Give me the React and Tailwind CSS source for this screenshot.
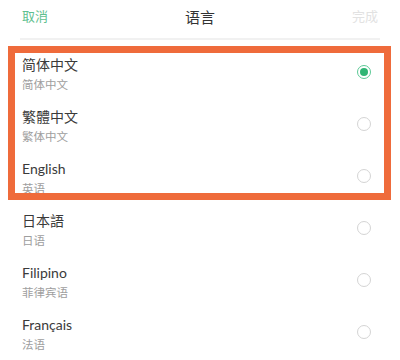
import React from "react";

const items = [
  { t: "简体中文", s: "简体中文", sel: true },
  { t: "繁體中文", s: "繁体中文" },
  { t: "English", s: "英语" },
  { t: "日本語", s: "日语" },
  { t: "Filipino", s: "菲律宾语" },
  { t: "Français", s: "法语" },
];

const font = { fontFamily: 'Lato, "Noto Sans CJK SC", sans-serif' };

function Radio({ sel }) {
  if (sel) {
    return (
      <div className="w-[14px] h-[14px] rounded-full border-[1.5px] border-[#5cc996] flex items-center justify-center">
        <div className="w-[8px] h-[8px] rounded-full bg-[#2fb574]" />
      </div>
    );
  }
  return <div className="w-[14px] h-[14px] rounded-full border-[1.5px] border-[#d4d4d4]" />;
}

export default function App() {
  return (
    <div className="relative w-[400px] h-[360px] bg-white overflow-hidden" style={font}>
      <div className="h-[38px] flex items-center justify-between px-[22px] pb-[4px]">
        <span className="text-[13px] text-[#5fbf90]">取消</span>
        <span className="text-[15px] text-[#333]">语言</span>
        <span className="text-[13px] text-[#e2e2e2]">完成</span>
      </div>
      <div className="mx-[20px] h-[2px] bg-[#f1f1f1]" />
      <div className="pt-[8px]">
        {items.map((it) => (
          <div key={it.t} className="h-[52px] flex items-center pl-[22px] pr-[29px]">
            <div className="flex-1 flex flex-col">
              <span className="text-[14px] leading-[20px] text-[#3a3a3a]">{it.t}</span>
              <span className="text-[11.5px] leading-[16px] mt-[2px] text-[#9e9e9e]">{it.s}</span>
            </div>
            <div className="-mt-[4px]">
              <Radio sel={it.sel} />
            </div>
          </div>
        ))}
      </div>
      <div className="absolute left-[8px] top-[46px] w-[383px] h-[154px] border-[7px] border-[#ef6b3b] pointer-events-none" />
    </div>
  );
}
